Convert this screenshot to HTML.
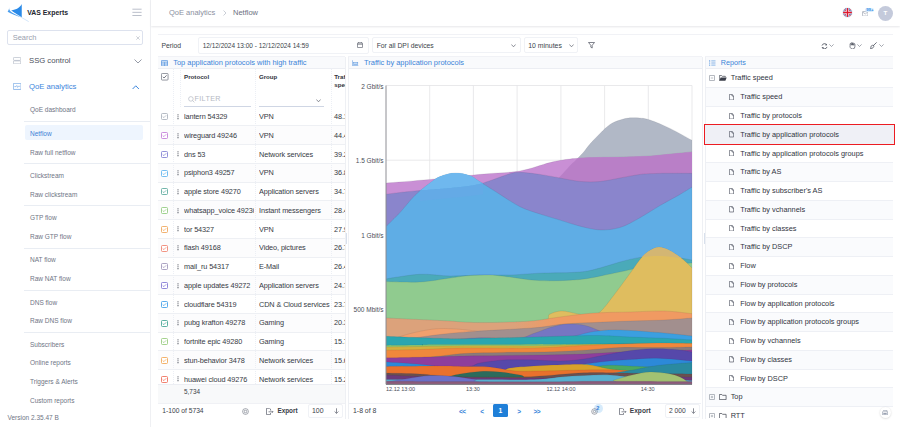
<!DOCTYPE html>
<html><head><meta charset="utf-8">
<style>
*{box-sizing:border-box;margin:0;padding:0}
html,body{width:900px;height:427px;overflow:hidden;background:#fff;font-family:"Liberation Sans",sans-serif;color:#3b3f4a}
.a{position:absolute}
.t{position:absolute;white-space:nowrap;line-height:10px;height:10px}
#side{position:absolute;left:0;top:0;width:151px;height:427px;background:#fff;border-right:1px solid #eff0f3}
.si{font-size:6.5px;color:#6f7585;left:30px;margin-top:0.6px}
.sep{position:absolute;left:24px;width:126px;height:1px;background:#e9edf3}
#hdr{position:absolute;left:151px;top:0;width:749px;height:26px;background:#fff;box-shadow:0 1px 2px #e6e7ea}

#card{position:absolute;left:158px;top:33.5px;width:735px;height:385px;border-top:1.5px solid #f4f5f8;background:#fff}
.box{position:absolute;border:1px solid #f0f2f6;border-radius:2px;background:#fff}
.tb{font-size:6.8px;color:#3b3f4a}
.ptitle{position:absolute;top:56.2px;height:12.6px;background:#f9fafc;border-bottom:1px solid #eceef3}
.ttl{font-size:7.45px;color:#3b84d8;margin-top:0.7px}
.row{position:absolute;left:158px;width:186.5px;height:18.75px;border-bottom:1px solid #eef0f4}
.cb{position:absolute;left:161px;width:6px;height:6px;border:0.8px solid;border-radius:1px}
.cb:after{content:"";position:absolute;left:1.2px;top:0.6px;width:2.4px;height:1.4px;border-left:0.7px solid;border-bottom:0.7px solid;border-color:inherit;transform:rotate(-45deg)}
.keb{position:absolute;left:177px;width:1.2px;height:5px;background:radial-gradient(circle,#555a66 0.55px,transparent 0.6px) 0 0/1.2px 1.67px}
.td{font-size:7.3px;color:#363a44;letter-spacing:-0.1px}
.tv{font-size:7.3px;color:#363a44;left:334px;letter-spacing:-0.1px}
.rr{position:absolute;left:705.5px;width:187.5px;height:18.75px;border-bottom:1px solid #eef0f5}
.rt{font-size:7.35px;color:#30343e;left:740.2px}
.fi{position:absolute;left:729.2px;width:4.6px;height:6px}
</style></head><body>
<div id="side">
  <!-- logo -->
  <svg class="a" style="left:0;top:0" width="30" height="24" viewBox="0 0 30 24">
    <path d="M21.75 4 C20.2 7.3 16.5 9.6 11.2 10.4 L21.75 17.6 Z" fill="#2a8ae8"/>
    <path d="M9.3 7 C8.7 9.2 9.6 11 12 12.6 L21.75 17.6 C16.5 16 11 13.8 7.6 11.8 C8.5 10.6 9 9.2 9.3 7Z" fill="#4b9eee"/>
    <path d="M10 10.3 Q13 13 21.5 17.4" stroke="#fff" stroke-width="0.45" fill="none" opacity="0.8"/>
    <path d="M21.75 17.6 L28.7 21.6" stroke="#a6cdf4" stroke-width="0.5"/>
  </svg>
  <div class="t" style="left:27.2px;top:8px;font-size:6.9px;font-weight:bold;color:#23262e">VAS Experts</div>
  <svg class="a" style="left:132px;top:8px" width="10" height="8.5" viewBox="0 0 10 8.5"><path d="M0.4 1.2 H9.6 M0.4 4.35 H9.6 M0.4 7.5 H9.6" stroke="#b3b9c5" stroke-width="0.9"/></svg>
  <!-- search -->
  <div class="a" style="left:7px;top:30px;width:135.5px;height:15px;border:1px solid #dde2ee;border-radius:2px"></div>
  <div class="t" style="left:12.7px;top:32.6px;font-size:7.5px;color:#9aa0ae">Search</div>
  <svg class="a" style="left:135.8px;top:35.5px" width="4" height="4" viewBox="0 0 4 4"><path d="M0.3 0.3 L3.7 3.7 M3.7 0.3 L0.3 3.7" stroke="#b0b5c0" stroke-width="0.6"/></svg>
  <!-- SSG control -->
  <svg class="a" style="left:12.8px;top:57.2px" width="8.2" height="7.3" viewBox="0 0 8.2 7.3"><rect x="0.4" y="0.4" width="7.4" height="3" rx="0.9" fill="none" stroke="#b4bac6" stroke-width="0.75"/><rect x="0.4" y="3.9" width="7.4" height="3" rx="0.9" fill="none" stroke="#b4bac6" stroke-width="0.75"/></svg>
  <div class="t" style="left:29px;top:56.2px;font-size:7.7px;color:#4b505c">SSG control</div>
  <svg class="a" style="left:134px;top:59px" width="8" height="5" viewBox="0 0 8 5"><path d="M0.5 0.5 L4 4 L7.5 0.5" fill="none" stroke="#7b8190" stroke-width="0.8"/></svg>
  <!-- QoE analytics -->
  <svg class="a" style="left:12.6px;top:82.8px" width="8.4" height="6.8" viewBox="0 0 8.4 6.8"><rect x="0.35" y="0.35" width="7.7" height="6.1" rx="0.4" fill="none" stroke="#5d98e0" stroke-width="0.65"/><path d="M1.3 3.6 H3 L3.8 2.5 L4.6 4.4 L5.3 3.3 H7.2" fill="none" stroke="#5d98e0" stroke-width="0.55"/></svg>
  <div class="t" style="left:29px;top:81.6px;font-size:7.7px;color:#3d86dc">QoE analytics</div>
  <svg class="a" style="left:132.3px;top:85px" width="7.5" height="5" viewBox="0 0 7.5 5"><path d="M0.6 4 L3.75 0.8 L6.9 4" fill="none" stroke="#3d86dc" stroke-width="1"/></svg>

  <div class="t si" style="top:104.7px">QoE dashboard</div>
  <div class="sep" style="top:121px"></div>
  <div class="a" style="left:24.5px;top:125px;width:118.5px;height:15px;background:#eef5fe;border-radius:2px"></div>
  <div class="t si" style="top:128.2px;color:#3d7fd6">Netflow</div>
  <div class="t si" style="top:147px">Raw full netflow</div>
  <div class="sep" style="top:163px"></div>
  <div class="t si" style="top:170.5px">Clickstream</div>
  <div class="t si" style="top:189px">Raw clickstream</div>
  <div class="sep" style="top:205px"></div>
  <div class="t si" style="top:212.5px">GTP flow</div>
  <div class="t si" style="top:231.3px">Raw GTP flow</div>
  <div class="sep" style="top:247.5px"></div>
  <div class="t si" style="top:254.7px">NAT flow</div>
  <div class="t si" style="top:273.5px">Raw NAT flow</div>
  <div class="sep" style="top:290px"></div>
  <div class="t si" style="top:297px">DNS flow</div>
  <div class="t si" style="top:315.8px">Raw DNS flow</div>
  <div class="sep" style="top:332px"></div>
  <div class="t si" style="top:339.2px">Subscribers</div>
  <div class="t si" style="top:357.9px">Online reports</div>
  <div class="t si" style="top:376.9px">Triggers &amp; Alerts</div>
  <div class="t si" style="top:395.7px">Custom reports</div>
  <div class="t si" style="left:7.5px;top:412.9px">Version 2.35.47 B</div>
</div>

<div id="hdr">
  <div class="t" style="left:18px;top:7.6px;font-size:7.5px;color:#8b90a0">QoE analytics</div>
  <svg class="a" style="left:72px;top:10px" width="4" height="6" viewBox="0 0 4 6"><path d="M0.5 0.5 L3 3 L0.5 5.5" fill="none" stroke="#b5bac5" stroke-width="0.7"/></svg>
  <div class="t" style="left:82px;top:7.6px;font-size:7.5px;color:#6b7080">Netflow</div>
  <svg class="a" style="left:689.5px;top:6.4px" width="13" height="13" viewBox="0 0 13 13">
    <defs><clipPath id="fc"><circle cx="6.5" cy="6.5" r="4.4"/></clipPath></defs>
    <circle cx="6.5" cy="6.5" r="5.3" fill="#eef0f4"/>
    <g clip-path="url(#fc)">
      <rect x="0" y="0" width="13" height="13" fill="#2a3d8f"/>
      <path d="M0 0 L13 13 M13 0 L0 13" stroke="#fff" stroke-width="1.4"/>
      <path d="M0 0 L13 13 M13 0 L0 13" stroke="#d52b3a" stroke-width="0.8"/>
      <path d="M6.5 0 V13 M0 6.5 H13" stroke="#fff" stroke-width="2.4"/>
      <path d="M6.5 0 V13 M0 6.5 H13" stroke="#e0182d" stroke-width="1.3"/>
    </g>
  </svg>
  <svg class="a" style="left:710.5px;top:10.5px" width="6.5" height="5.5" viewBox="0 0 6.5 5.5"><rect x="0.4" y="0.6" width="5.6" height="4.5" rx="0.6" fill="none" stroke="#9aa0ae" stroke-width="0.7"/><path d="M0.6 1 L3.2 3 L5.8 1" fill="none" stroke="#9aa0ae" stroke-width="0.6"/></svg>
  <div class="a" style="left:714.2px;top:7.5px;width:9.3px;height:4.2px;border-radius:2.1px;background:#d9ecfc"></div>
  <div class="t" style="left:714.2px;width:9.3px;text-align:center;top:4.6px;font-size:4.2px;font-weight:bold;color:#3a8ee6">99+</div>
  <div class="a" style="left:726.8px;top:5.7px;width:15px;height:15px;border-radius:50%;background:#c4cadb"></div>
  <div class="t" style="left:726.8px;width:15px;text-align:center;top:8.4px;font-size:6.2px;font-weight:bold;color:#fff">T</div>
</div>


<div id="card"></div>
<!-- toolbar -->
<div class="a" style="left:158px;top:33.5px;width:735px;height:1px;background:#f1f2f6"></div>
<div class="t tb" style="left:161.5px;top:40.7px">Period</div>
<div class="box" style="left:198px;top:37.3px;width:171px;height:16.4px"></div>
<div class="t" style="left:202.7px;top:40.7px;font-size:6.46px;color:#3b3f4a">12/12/2024 13:00 - 12/12/2024 14:59</div>
<svg class="a" style="left:357px;top:42px" width="6" height="6" viewBox="0 0 6 6"><rect x="0.4" y="0.9" width="5.2" height="4.7" rx="0.6" fill="none" stroke="#5a5f6c" stroke-width="0.7"/><path d="M0.4 2.2 H5.6 M1.7 0 V1.2 M4.3 0 V1.2" stroke="#5a5f6c" stroke-width="0.7"/></svg>
<div class="box" style="left:372.3px;top:37.3px;width:148.5px;height:16.2px"></div>
<div class="t tb" style="left:376.7px;top:40.6px">For all DPI devices</div>
<svg class="a" style="left:510.5px;top:43.5px" width="5" height="3.5" viewBox="0 0 5 3.5"><path d="M0.4 0.5 L2.5 2.8 L4.6 0.5" fill="none" stroke="#5a5f6c" stroke-width="0.7"/></svg>
<div class="box" style="left:524.3px;top:37.3px;width:54px;height:16.2px"></div>
<div class="t tb" style="left:528.2px;top:40.6px;font-size:6.9px">10 minutes</div>
<svg class="a" style="left:569px;top:43.5px" width="5" height="3.5" viewBox="0 0 5 3.5"><path d="M0.4 0.5 L2.5 2.8 L4.6 0.5" fill="none" stroke="#5a5f6c" stroke-width="0.7"/></svg>
<svg class="a" style="left:588px;top:42.3px" width="7" height="6.5" viewBox="0 0 7 6.5"><path d="M0.5 0.5 H6.5 L4.2 3.3 V6 L2.8 5.2 V3.3 Z" fill="none" stroke="#4a4f5c" stroke-width="0.7" stroke-linejoin="round"/></svg>
<!-- right toolbar icons -->
<svg class="a" style="left:820.5px;top:42.5px" width="7" height="6.5" viewBox="0 0 7 6.5"><path d="M1 2.6 A2.6 2.6 0 0 1 5.8 2 M6 3.9 A2.6 2.6 0 0 1 1.2 4.5" fill="none" stroke="#4a4f5c" stroke-width="0.8"/><path d="M5 0.6 L6.1 2.3 L4.3 2.4Z M2 6 L0.9 4.2 L2.7 4.1Z" fill="#4a4f5c"/></svg>
<svg class="a" style="left:829.4px;top:44.3px" width="5" height="3" viewBox="0 0 5 3"><path d="M0.4 0.4 L2.5 2.5 L4.6 0.4" fill="none" stroke="#6a6f7c" stroke-width="0.6"/></svg>
<svg class="a" style="left:848.6px;top:41.8px" width="7" height="7.5" viewBox="0 0 7 7.5"><path d="M1.1 3.8 V2 A0.6 0.6 0 0 1 2.3 2 V3.2 V1.2 A0.6 0.6 0 0 1 3.5 1.2 V3.2 V1.5 A0.6 0.6 0 0 1 4.7 1.5 V3.3 V2.3 A0.6 0.6 0 0 1 5.9 2.3 V4.6 Q5.9 7 3.6 7 Q1.9 7 1.3 5.6 Q0.8 4.6 1.1 3.8Z" fill="none" stroke="#4a4f5c" stroke-width="0.7" stroke-linejoin="round"/></svg>
<svg class="a" style="left:857.3px;top:44.3px" width="5" height="3" viewBox="0 0 5 3"><path d="M0.4 0.4 L2.5 2.5 L4.6 0.4" fill="none" stroke="#6a6f7c" stroke-width="0.6"/></svg>
<svg class="a" style="left:869.5px;top:41.8px" width="7" height="7" viewBox="0 0 7 7"><path d="M6.6 0.4 L3.3 3.7" stroke="#4a4f5c" stroke-width="0.8"/><path d="M3.6 3.4 Q4.2 4.6 3.2 5.6 Q2 6.7 0.4 6.6 Q0.9 6 0.9 4.9 Q1 3.7 2.3 3.3Z" fill="none" stroke="#4a4f5c" stroke-width="0.75"/></svg>
<svg class="a" style="left:879px;top:44.3px" width="5" height="3" viewBox="0 0 5 3"><path d="M0.4 0.4 L2.5 2.5 L4.6 0.4" fill="none" stroke="#6a6f7c" stroke-width="0.6"/></svg>

<!-- panel title rows -->
<div class="ptitle" style="left:158px;width:186.5px;border-top:1px solid #f1f2f6"></div>
<div class="ptitle" style="left:348.4px;width:353.2px;border-top:1px solid #f1f2f6"></div>
<div class="ptitle" style="left:705.3px;width:187.7px;border-top:1px solid #f1f2f6"></div>
<div class="a" style="left:344.5px;top:56.7px;width:1px;height:362px;background:#eef0f4"></div>
<div class="a" style="left:348.4px;top:56.7px;width:1px;height:362px;background:#eef0f4"></div>
<div class="a" style="left:701.5px;top:56.7px;width:1px;height:362px;background:#eef0f4"></div>
<div class="a" style="left:705.3px;top:56.7px;width:1px;height:362px;background:#eef0f4"></div>
<div class="a" style="left:346px;top:232.6px;width:1px;height:11.3px;background:#d8e0ec"></div>
<div class="a" style="left:703.5px;top:232.6px;width:1px;height:11.3px;background:#d8e0ec"></div>

<svg class="a" style="left:161px;top:59.6px" width="7" height="6.5" viewBox="0 0 7 6.5"><rect x="0.4" y="0.4" width="6.2" height="5.6" rx="0.7" fill="#dbe8f8" stroke="#4a8ddc" stroke-width="0.7"/><path d="M0.4 2.2 H6.6 M0.4 4 H6.6 M3.5 2.2 V6" stroke="#4a8ddc" stroke-width="0.55"/></svg>
<div class="t ttl" style="left:173.2px;top:57.4px">Top application protocols with high traffic</div>
<svg class="a" style="left:352px;top:59.8px" width="6.5" height="6" viewBox="0 0 6.5 6"><path d="M0.4 0.3 V5.6 H6.3" fill="none" stroke="#5b95dd" stroke-width="0.6"/><rect x="1.7" y="2.5" width="4.1" height="2.2" fill="#c4dbf5" stroke="#5b95dd" stroke-width="0.5"/></svg>
<div class="t ttl" style="left:364px;top:57.2px">Traffic by application protocols</div>
<svg class="a" style="left:709.4px;top:59.8px" width="7" height="6" viewBox="0 0 7 6"><path d="M2.3 0.9 H6.5 M2.3 3 H6.5 M2.3 5.1 H6.5" stroke="#3b84d8" stroke-width="0.6"/><circle cx="0.7" cy="0.9" r="0.55" fill="#3b84d8"/><circle cx="0.7" cy="3" r="0.55" fill="#3b84d8"/><circle cx="0.7" cy="5.1" r="0.55" fill="#3b84d8"/></svg>
<div class="t ttl" style="left:720.8px;top:57.6px;font-size:7.2px">Reports</div>


<!-- table -->
<div class="a" style="left:0;top:0;width:344.5px;height:427px;overflow:hidden">
<svg class="a" style="left:161px;top:73px" width="7.5" height="7.5" viewBox="0 0 7.5 7.5"><rect x="0.45" y="0.45" width="6.6" height="6.6" rx="0.8" fill="#fff" stroke="#777c88" stroke-width="0.8"/><path d="M1.9 3.8 L3.1 5 L5.6 2.3" fill="none" stroke="#4a4f5c" stroke-width="0.75"/></svg>
<div class="t" style="left:184px;top:72px;font-size:6.2px;font-weight:bold;color:#2f333c">Protocol</div>
<div class="t" style="left:259px;top:72px;font-size:6.1px;font-weight:bold;color:#2f333c">Group</div>
<div class="t" style="left:334.2px;top:72px;font-size:6.2px;font-weight:bold;color:#2f333c">Traffic</div>
<div class="t" style="left:334.2px;top:79.5px;font-size:6.2px;font-weight:bold;color:#2f333c">speed</div>
<svg class="a" style="left:188px;top:96px" width="7" height="7" viewBox="0 0 7 7"><circle cx="2.9" cy="2.9" r="2.3" fill="none" stroke="#a9aebb" stroke-width="0.6"/><path d="M4.6 4.6 L6.4 6.4" stroke="#a9aebb" stroke-width="0.6"/></svg>
<div class="t" style="left:194.5px;top:94.3px;font-size:7.2px;color:#b5b9c4;letter-spacing:0.35px">FILTER</div>
<div class="a" style="left:184px;top:106px;width:66.5px;height:1px;background:#cfd6e4"></div>
<div class="a" style="left:259px;top:106px;width:64.7px;height:1px;background:#cfd6e4"></div>
<svg class="a" style="left:316px;top:98.5px" width="5" height="3.5" viewBox="0 0 5 3.5"><path d="M0.4 0.5 L2.5 2.8 L4.6 0.5" fill="none" stroke="#5a5f6c" stroke-width="0.7"/></svg>
<div class="row" style="top:107.55px;background:#fff"></div><svg class="a" style="left:160.8px;top:113.40px" width="7" height="7" viewBox="0 0 7 7"><rect x="0.5" y="0.5" width="6" height="6" rx="0.9" fill="#fff" stroke="#a9b0bb" stroke-width="0.85"/><path d="M1.7 3.5 L2.9 4.6 L5.2 2.3" fill="none" stroke="#a9b0bb" stroke-width="0.75"/></svg><svg class="a" style="left:176.5px;top:113.90px" width="2" height="6" viewBox="0 0 2 6"><circle cx="1" cy="0.8" r="0.62" fill="#4a4f5a"/><circle cx="1" cy="2.75" r="0.62" fill="#4a4f5a"/><circle cx="1" cy="4.7" r="0.62" fill="#4a4f5a"/></svg><div class="t td" style="left:184px;top:112.10px;width:70px;overflow:hidden">lantern 54329</div><div class="t td" style="left:259px;top:112.10px;width:71px;overflow:hidden">VPN</div><div class="t tv" style="top:112.10px">48.1</div>
<div class="row" style="top:126.30px;background:#fcfcfd"></div><svg class="a" style="left:160.8px;top:132.15px" width="7" height="7" viewBox="0 0 7 7"><rect x="0.5" y="0.5" width="6" height="6" rx="0.9" fill="#fff" stroke="#c27ad8" stroke-width="0.85"/><path d="M1.7 3.5 L2.9 4.6 L5.2 2.3" fill="none" stroke="#c27ad8" stroke-width="0.75"/></svg><svg class="a" style="left:176.5px;top:132.65px" width="2" height="6" viewBox="0 0 2 6"><circle cx="1" cy="0.8" r="0.62" fill="#4a4f5a"/><circle cx="1" cy="2.75" r="0.62" fill="#4a4f5a"/><circle cx="1" cy="4.7" r="0.62" fill="#4a4f5a"/></svg><div class="t td" style="left:184px;top:130.85px;width:70px;overflow:hidden">wireguard 49246</div><div class="t td" style="left:259px;top:130.85px;width:71px;overflow:hidden">VPN</div><div class="t tv" style="top:130.85px">44.4</div>
<div class="row" style="top:145.05px;background:#fff"></div><svg class="a" style="left:160.8px;top:150.90px" width="7" height="7" viewBox="0 0 7 7"><rect x="0.5" y="0.5" width="6" height="6" rx="0.9" fill="#fff" stroke="#7f7dd2" stroke-width="0.85"/><path d="M1.7 3.5 L2.9 4.6 L5.2 2.3" fill="none" stroke="#7f7dd2" stroke-width="0.75"/></svg><svg class="a" style="left:176.5px;top:151.40px" width="2" height="6" viewBox="0 0 2 6"><circle cx="1" cy="0.8" r="0.62" fill="#4a4f5a"/><circle cx="1" cy="2.75" r="0.62" fill="#4a4f5a"/><circle cx="1" cy="4.7" r="0.62" fill="#4a4f5a"/></svg><div class="t td" style="left:184px;top:149.60px;width:70px;overflow:hidden">dns 53</div><div class="t td" style="left:259px;top:149.60px;width:71px;overflow:hidden">Network services</div><div class="t tv" style="top:149.60px">39.2</div>
<div class="row" style="top:163.80px;background:#fcfcfd"></div><svg class="a" style="left:160.8px;top:169.65px" width="7" height="7" viewBox="0 0 7 7"><rect x="0.5" y="0.5" width="6" height="6" rx="0.9" fill="#fff" stroke="#5cb2ee" stroke-width="0.85"/><path d="M1.7 3.5 L2.9 4.6 L5.2 2.3" fill="none" stroke="#5cb2ee" stroke-width="0.75"/></svg><svg class="a" style="left:176.5px;top:170.15px" width="2" height="6" viewBox="0 0 2 6"><circle cx="1" cy="0.8" r="0.62" fill="#4a4f5a"/><circle cx="1" cy="2.75" r="0.62" fill="#4a4f5a"/><circle cx="1" cy="4.7" r="0.62" fill="#4a4f5a"/></svg><div class="t td" style="left:184px;top:168.35px;width:70px;overflow:hidden">psiphon3 49257</div><div class="t td" style="left:259px;top:168.35px;width:71px;overflow:hidden">VPN</div><div class="t tv" style="top:168.35px">36.8</div>
<div class="row" style="top:182.55px;background:#fff"></div><svg class="a" style="left:160.8px;top:188.40px" width="7" height="7" viewBox="0 0 7 7"><rect x="0.5" y="0.5" width="6" height="6" rx="0.9" fill="#fff" stroke="#58a99c" stroke-width="0.85"/><path d="M1.7 3.5 L2.9 4.6 L5.2 2.3" fill="none" stroke="#58a99c" stroke-width="0.75"/></svg><svg class="a" style="left:176.5px;top:188.90px" width="2" height="6" viewBox="0 0 2 6"><circle cx="1" cy="0.8" r="0.62" fill="#4a4f5a"/><circle cx="1" cy="2.75" r="0.62" fill="#4a4f5a"/><circle cx="1" cy="4.7" r="0.62" fill="#4a4f5a"/></svg><div class="t td" style="left:184px;top:187.10px;width:70px;overflow:hidden">apple store 49270</div><div class="t td" style="left:259px;top:187.10px;width:71px;overflow:hidden">Application servers</div><div class="t tv" style="top:187.10px">34.7</div>
<div class="row" style="top:201.30px;background:#fcfcfd"></div><svg class="a" style="left:160.8px;top:207.15px" width="7" height="7" viewBox="0 0 7 7"><rect x="0.5" y="0.5" width="6" height="6" rx="0.9" fill="#fff" stroke="#8fca7c" stroke-width="0.85"/><path d="M1.7 3.5 L2.9 4.6 L5.2 2.3" fill="none" stroke="#8fca7c" stroke-width="0.75"/></svg><svg class="a" style="left:176.5px;top:207.65px" width="2" height="6" viewBox="0 0 2 6"><circle cx="1" cy="0.8" r="0.62" fill="#4a4f5a"/><circle cx="1" cy="2.75" r="0.62" fill="#4a4f5a"/><circle cx="1" cy="4.7" r="0.62" fill="#4a4f5a"/></svg><div class="t td" style="left:184px;top:205.85px;width:70px;overflow:hidden">whatsapp_voice 49230</div><div class="t td" style="left:259px;top:205.85px;width:71px;overflow:hidden">Instant messengers</div><div class="t tv" style="top:205.85px">28.4</div>
<div class="row" style="top:220.05px;background:#fff"></div><svg class="a" style="left:160.8px;top:225.90px" width="7" height="7" viewBox="0 0 7 7"><rect x="0.5" y="0.5" width="6" height="6" rx="0.9" fill="#fff" stroke="#f0a456" stroke-width="0.85"/><path d="M1.7 3.5 L2.9 4.6 L5.2 2.3" fill="none" stroke="#f0a456" stroke-width="0.75"/></svg><svg class="a" style="left:176.5px;top:226.40px" width="2" height="6" viewBox="0 0 2 6"><circle cx="1" cy="0.8" r="0.62" fill="#4a4f5a"/><circle cx="1" cy="2.75" r="0.62" fill="#4a4f5a"/><circle cx="1" cy="4.7" r="0.62" fill="#4a4f5a"/></svg><div class="t td" style="left:184px;top:224.60px;width:70px;overflow:hidden">tor 54327</div><div class="t td" style="left:259px;top:224.60px;width:71px;overflow:hidden">VPN</div><div class="t tv" style="top:224.60px">27.9</div>
<div class="row" style="top:238.80px;background:#fcfcfd"></div><svg class="a" style="left:160.8px;top:244.65px" width="7" height="7" viewBox="0 0 7 7"><rect x="0.5" y="0.5" width="6" height="6" rx="0.9" fill="#fff" stroke="#f0806c" stroke-width="0.85"/><path d="M1.7 3.5 L2.9 4.6 L5.2 2.3" fill="none" stroke="#f0806c" stroke-width="0.75"/></svg><svg class="a" style="left:176.5px;top:245.15px" width="2" height="6" viewBox="0 0 2 6"><circle cx="1" cy="0.8" r="0.62" fill="#4a4f5a"/><circle cx="1" cy="2.75" r="0.62" fill="#4a4f5a"/><circle cx="1" cy="4.7" r="0.62" fill="#4a4f5a"/></svg><div class="t td" style="left:184px;top:243.35px;width:70px;overflow:hidden">flash 49168</div><div class="t td" style="left:259px;top:243.35px;width:71px;overflow:hidden">Video, pictures</div><div class="t tv" style="top:243.35px">26.7</div>
<div class="row" style="top:257.55px;background:#fff"></div><svg class="a" style="left:160.8px;top:263.40px" width="7" height="7" viewBox="0 0 7 7"><rect x="0.5" y="0.5" width="6" height="6" rx="0.9" fill="#fff" stroke="#9d93b8" stroke-width="0.85"/><path d="M1.7 3.5 L2.9 4.6 L5.2 2.3" fill="none" stroke="#9d93b8" stroke-width="0.75"/></svg><svg class="a" style="left:176.5px;top:263.90px" width="2" height="6" viewBox="0 0 2 6"><circle cx="1" cy="0.8" r="0.62" fill="#4a4f5a"/><circle cx="1" cy="2.75" r="0.62" fill="#4a4f5a"/><circle cx="1" cy="4.7" r="0.62" fill="#4a4f5a"/></svg><div class="t td" style="left:184px;top:262.10px;width:70px;overflow:hidden">mail_ru 54317</div><div class="t td" style="left:259px;top:262.10px;width:71px;overflow:hidden">E-Mail</div><div class="t tv" style="top:262.10px">26.4</div>
<div class="row" style="top:276.30px;background:#fcfcfd"></div><svg class="a" style="left:160.8px;top:282.15px" width="7" height="7" viewBox="0 0 7 7"><rect x="0.5" y="0.5" width="6" height="6" rx="0.9" fill="#fff" stroke="#7d72d2" stroke-width="0.85"/><path d="M1.7 3.5 L2.9 4.6 L5.2 2.3" fill="none" stroke="#7d72d2" stroke-width="0.75"/></svg><svg class="a" style="left:176.5px;top:282.65px" width="2" height="6" viewBox="0 0 2 6"><circle cx="1" cy="0.8" r="0.62" fill="#4a4f5a"/><circle cx="1" cy="2.75" r="0.62" fill="#4a4f5a"/><circle cx="1" cy="4.7" r="0.62" fill="#4a4f5a"/></svg><div class="t td" style="left:184px;top:280.85px;width:70px;overflow:hidden">apple updates 49272</div><div class="t td" style="left:259px;top:280.85px;width:71px;overflow:hidden">Application servers</div><div class="t tv" style="top:280.85px">24.7</div>
<div class="row" style="top:295.05px;background:#fff"></div><svg class="a" style="left:160.8px;top:300.90px" width="7" height="7" viewBox="0 0 7 7"><rect x="0.5" y="0.5" width="6" height="6" rx="0.9" fill="#fff" stroke="#3c9de8" stroke-width="0.85"/><path d="M1.7 3.5 L2.9 4.6 L5.2 2.3" fill="none" stroke="#3c9de8" stroke-width="0.75"/></svg><svg class="a" style="left:176.5px;top:301.40px" width="2" height="6" viewBox="0 0 2 6"><circle cx="1" cy="0.8" r="0.62" fill="#4a4f5a"/><circle cx="1" cy="2.75" r="0.62" fill="#4a4f5a"/><circle cx="1" cy="4.7" r="0.62" fill="#4a4f5a"/></svg><div class="t td" style="left:184px;top:299.60px;width:70px;overflow:hidden">cloudflare 54319</div><div class="t td" style="left:259px;top:299.60px;width:71px;overflow:hidden">CDN &amp; Cloud services</div><div class="t tv" style="top:299.60px">23.7</div>
<div class="row" style="top:313.80px;background:#fcfcfd"></div><svg class="a" style="left:160.8px;top:319.65px" width="7" height="7" viewBox="0 0 7 7"><rect x="0.5" y="0.5" width="6" height="6" rx="0.9" fill="#fff" stroke="#3ea392" stroke-width="0.85"/><path d="M1.7 3.5 L2.9 4.6 L5.2 2.3" fill="none" stroke="#3ea392" stroke-width="0.75"/></svg><svg class="a" style="left:176.5px;top:320.15px" width="2" height="6" viewBox="0 0 2 6"><circle cx="1" cy="0.8" r="0.62" fill="#4a4f5a"/><circle cx="1" cy="2.75" r="0.62" fill="#4a4f5a"/><circle cx="1" cy="4.7" r="0.62" fill="#4a4f5a"/></svg><div class="t td" style="left:184px;top:318.35px;width:70px;overflow:hidden">pubg krafton 49278</div><div class="t td" style="left:259px;top:318.35px;width:71px;overflow:hidden">Gaming</div><div class="t tv" style="top:318.35px">20.3</div>
<div class="row" style="top:332.55px;background:#fff"></div><svg class="a" style="left:160.8px;top:338.40px" width="7" height="7" viewBox="0 0 7 7"><rect x="0.5" y="0.5" width="6" height="6" rx="0.9" fill="#fff" stroke="#93ca7a" stroke-width="0.85"/><path d="M1.7 3.5 L2.9 4.6 L5.2 2.3" fill="none" stroke="#93ca7a" stroke-width="0.75"/></svg><svg class="a" style="left:176.5px;top:338.90px" width="2" height="6" viewBox="0 0 2 6"><circle cx="1" cy="0.8" r="0.62" fill="#4a4f5a"/><circle cx="1" cy="2.75" r="0.62" fill="#4a4f5a"/><circle cx="1" cy="4.7" r="0.62" fill="#4a4f5a"/></svg><div class="t td" style="left:184px;top:337.10px;width:70px;overflow:hidden">fortnite epic 49280</div><div class="t td" style="left:259px;top:337.10px;width:71px;overflow:hidden">Gaming</div><div class="t tv" style="top:337.10px">15.7</div>
<div class="row" style="top:351.30px;background:#fcfcfd"></div><svg class="a" style="left:160.8px;top:357.15px" width="7" height="7" viewBox="0 0 7 7"><rect x="0.5" y="0.5" width="6" height="6" rx="0.9" fill="#fff" stroke="#f2a552" stroke-width="0.85"/><path d="M1.7 3.5 L2.9 4.6 L5.2 2.3" fill="none" stroke="#f2a552" stroke-width="0.75"/></svg><svg class="a" style="left:176.5px;top:357.65px" width="2" height="6" viewBox="0 0 2 6"><circle cx="1" cy="0.8" r="0.62" fill="#4a4f5a"/><circle cx="1" cy="2.75" r="0.62" fill="#4a4f5a"/><circle cx="1" cy="4.7" r="0.62" fill="#4a4f5a"/></svg><div class="t td" style="left:184px;top:355.85px;width:70px;overflow:hidden">stun-behavior 3478</div><div class="t td" style="left:259px;top:355.85px;width:71px;overflow:hidden">Network services</div><div class="t tv" style="top:355.85px">15.6</div>
<div class="row" style="top:370.05px;background:#fff"></div><svg class="a" style="left:160.8px;top:375.90px" width="7" height="7" viewBox="0 0 7 7"><rect x="0.5" y="0.5" width="6" height="6" rx="0.9" fill="#fff" stroke="#f06a55" stroke-width="0.85"/><path d="M1.7 3.5 L2.9 4.6 L5.2 2.3" fill="none" stroke="#f06a55" stroke-width="0.75"/></svg><svg class="a" style="left:176.5px;top:376.40px" width="2" height="6" viewBox="0 0 2 6"><circle cx="1" cy="0.8" r="0.62" fill="#4a4f5a"/><circle cx="1" cy="2.75" r="0.62" fill="#4a4f5a"/><circle cx="1" cy="4.7" r="0.62" fill="#4a4f5a"/></svg><div class="t td" style="left:184px;top:374.60px;width:70px;overflow:hidden">huawei cloud 49276</div><div class="t td" style="left:259px;top:374.60px;width:71px;overflow:hidden">Network services</div><div class="t tv" style="top:374.60px">15.2</div>
<div class="a" style="left:172.5px;top:68.3px;width:0;height:316px;border-left:1px dotted #eceff5"></div>
<div class="a" style="left:180.3px;top:68.3px;width:0;height:39px;border-left:1px dotted #eceff5"></div>
<div class="a" style="left:254.8px;top:68.3px;width:0;height:316px;border-left:1px dotted #eceff5"></div>
<div class="a" style="left:330.5px;top:68.3px;width:0;height:316px;border-left:1px dotted #eceff5"></div>
<div class="a" style="left:158px;top:383.9px;width:186.5px;height:19.8px;background:#f8f9fa;border-top:1px solid #eceef3;border-bottom:1px solid #f0f1f5"></div>
<div class="t" style="left:184px;top:387.1px;font-size:6.4px;color:#3a3e48">5,734</div>
<div class="t" style="left:162.3px;top:406px;font-size:6.7px;color:#3a3e48">1-100 of 5734</div>
<svg class="a" style="left:242px;top:408px" width="7" height="7" viewBox="0 0 7 7"><circle cx="3.5" cy="3.5" r="2.9" fill="none" stroke="#6a6f7c" stroke-width="0.6"/><circle cx="3.5" cy="3.5" r="1.3" fill="none" stroke="#6a6f7c" stroke-width="0.6"/></svg>
<svg class="a" style="left:266px;top:407.5px" width="8" height="7" viewBox="0 0 8 7"><path d="M4.5 2.5 V1 L3.5 0.3 H0.5 V6.6 H4.5 V5" fill="none" stroke="#5a5f6c" stroke-width="0.7"/><path d="M2.5 3.8 H7 M6 2.8 L7 3.8 L6 4.8" fill="none" stroke="#5a5f6c" stroke-width="0.7"/></svg>
<div class="t" style="left:277.4px;top:406px;font-size:6.4px;font-weight:bold;color:#3a3e48">Export</div>
<div class="box" style="left:307.7px;top:404.3px;width:35.6px;height:13.4px"></div>
<div class="t" style="left:312px;top:406px;font-size:6.9px;color:#3a3e48">100</div>
<svg class="a" style="left:333.8px;top:408px" width="5" height="6" viewBox="0 0 5 6"><path d="M2.5 0.3 V5.3 M0.6 3.5 L2.5 5.4 L4.4 3.5" fill="none" stroke="#5a5f6c" stroke-width="0.7"/></svg>
</div>
<svg class="a" style="left:0;top:0" width="900" height="427" viewBox="0 0 900 427"><defs><linearGradient id="salg" x1="386" y1="0" x2="692" y2="0" gradientUnits="userSpaceOnUse"><stop offset="0.42" stop-color="#dca27b"/><stop offset="0.56" stop-color="#f09a62"/></linearGradient></defs><defs><clipPath id="pc"><rect x="386.0" y="84.5" width="306.0" height="299.8"/></clipPath></defs><line x1="386.0" y1="85.5" x2="692.0" y2="85.5" stroke="#e3e3e6" stroke-width="0.8"/><line x1="386.0" y1="160.2" x2="692.0" y2="160.2" stroke="#e3e3e6" stroke-width="0.8"/><line x1="386.0" y1="234.9" x2="692.0" y2="234.9" stroke="#e3e3e6" stroke-width="0.8"/><line x1="386.0" y1="309.6" x2="692.0" y2="309.6" stroke="#e3e3e6" stroke-width="0.8"/><line x1="386.0" y1="384.3" x2="692.0" y2="384.3" stroke="#e3e3e6" stroke-width="0.8"/><line x1="429.7" y1="85.5" x2="429.7" y2="384.3" stroke="#e3e3e6" stroke-width="0.8"/><line x1="473.4" y1="85.5" x2="473.4" y2="384.3" stroke="#e3e3e6" stroke-width="0.8"/><line x1="517.1" y1="85.5" x2="517.1" y2="384.3" stroke="#e3e3e6" stroke-width="0.8"/><line x1="560.9" y1="85.5" x2="560.9" y2="384.3" stroke="#e3e3e6" stroke-width="0.8"/><line x1="604.6" y1="85.5" x2="604.6" y2="384.3" stroke="#e3e3e6" stroke-width="0.8"/><line x1="648.3" y1="85.5" x2="648.3" y2="384.3" stroke="#e3e3e6" stroke-width="0.8"/><line x1="692.0" y1="85.5" x2="692.0" y2="384.3" stroke="#e3e3e6" stroke-width="0.8"/><g clip-path="url(#pc)"><path d="M386.0 215.0 C413.3 209.5 518.0 191.5 550.0 182.0 C582.0 172.5 571.3 164.3 578.0 158.0 C584.7 151.7 586.3 148.1 590.0 144.0 C593.7 139.9 596.7 136.8 600.0 133.5 C603.3 130.2 606.7 126.8 610.0 124.5 C613.3 122.2 616.7 121.1 620.0 120.0 C623.3 118.9 626.7 118.1 630.0 117.8 C633.3 117.5 636.7 117.6 640.0 118.0 C643.3 118.4 645.0 118.3 650.0 120.0 C655.0 121.7 663.0 125.0 670.0 128.4 C677.0 131.8 688.3 138.3 692.0 140.3 L692.0 385.3 L386.0 385.3 Z" fill="#b1b8c6" stroke="rgba(40,40,60,0.18)" stroke-width="0.5"/><path d="M386.0 183.0 C393.3 182.4 413.7 180.9 430.0 179.4 C446.3 177.9 469.0 175.4 484.0 174.0 C499.0 172.6 509.0 172.8 520.0 170.9 C531.0 169.0 541.7 164.5 550.0 162.5 C558.3 160.5 563.3 159.8 570.0 159.0 C576.7 158.2 581.7 157.9 590.0 157.6 C598.3 157.3 610.0 157.4 620.0 157.1 C630.0 156.8 641.7 156.5 650.0 156.0 C658.3 155.5 663.0 154.8 670.0 154.1 C677.0 153.4 688.3 152.3 692.0 151.9 L692.0 385.3 L386.0 385.3 Z" fill="#c98fd5" stroke="rgba(40,40,60,0.18)" stroke-width="0.5"/><path d="M548.0 200.0 L550.4 194.3 L552.8 188.6 L555.2 183.2 L557.6 179.5 L560.0 176.5 L562.4 174.0 L564.8 171.2 L567.2 168.8 L569.6 166.0 L572.0 163.5 L574.4 161.4 L576.8 159.1 L579.2 158.1 L581.6 158.0 L584.0 157.9 L586.4 157.7 L588.8 157.6 L591.2 157.6 L593.6 157.5 L596.0 157.4 L598.4 157.4 L600.8 157.4 L603.2 157.3 L605.6 157.3 L608.0 157.3 L610.4 157.3 L612.8 157.2 L615.2 157.2 L617.6 157.2 L620.0 157.1 L622.4 157.0 L624.8 157.0 L627.2 156.9 L629.6 156.8 L632.0 156.8 L634.4 156.7 L636.8 156.6 L639.2 156.5 L641.6 156.4 L644.0 156.3 L646.4 156.2 L648.8 156.1 L651.2 155.9 L653.6 155.8 L656.0 155.5 L658.4 155.3 L660.8 155.1 L663.2 154.8 L665.6 154.6 L668.0 154.3 L670.4 154.0 L672.8 153.8 L675.2 153.6 L677.6 153.3 L680.0 153.1 L682.4 152.9 L684.8 152.6 L687.2 152.4 L689.6 152.2 L692.0 151.9 L692.0 200.0 L548.0 200.0Z" fill="#b97fc7"/><path d="M386.0 194.2 C390.8 193.6 404.3 191.9 415.0 190.9 C425.7 189.9 440.0 189.0 450.0 188.0 C460.0 187.0 468.3 186.2 475.0 185.0 C481.7 183.8 484.2 182.6 490.0 180.7 C495.8 178.8 505.0 175.1 510.0 173.7 C515.0 172.3 515.0 172.2 520.0 172.3 C525.0 172.4 533.3 173.5 540.0 174.4 C546.7 175.3 553.3 176.8 560.0 178.0 C566.7 179.2 573.3 180.8 580.0 181.4 C586.7 182.0 593.3 182.1 600.0 181.5 C606.7 180.9 613.3 179.2 620.0 178.0 C626.7 176.8 633.3 175.2 640.0 174.4 C646.7 173.6 651.3 173.6 660.0 173.4 C668.7 173.2 686.7 173.4 692.0 173.4 L692.0 385.3 L386.0 385.3 Z" fill="#8a85cc" stroke="rgba(40,40,60,0.18)" stroke-width="0.5"/><path d="M386.0 226.5 C388.3 224.2 395.2 217.7 400.0 212.5 C404.8 207.3 410.0 200.2 415.0 195.3 C420.0 190.4 425.8 186.1 430.0 183.0 C434.2 179.9 435.8 178.2 440.0 176.5 C444.2 174.8 450.0 173.1 455.0 173.0 C460.0 172.9 465.8 174.2 470.0 175.7 C474.2 177.2 475.0 178.7 480.0 181.8 C485.0 184.9 493.3 190.2 500.0 194.4 C506.7 198.6 513.3 203.4 520.0 206.7 C526.7 210.0 533.3 211.8 540.0 214.0 C546.7 216.2 553.3 218.1 560.0 220.1 C566.7 222.1 573.3 224.6 580.0 226.2 C586.7 227.8 593.3 229.7 600.0 229.9 C606.7 230.1 613.3 229.5 620.0 227.5 C626.7 225.5 633.3 221.4 640.0 217.7 C646.7 214.0 653.3 209.4 660.0 205.5 C666.7 201.6 674.7 197.5 680.0 194.4 C685.3 191.3 690.0 188.3 692.0 187.1 L692.0 385.3 L386.0 385.3 Z" fill="#5fade5" stroke="rgba(40,40,60,0.18)" stroke-width="0.5"/><path d="M418.0 190.6 L419.1 190.5 L420.3 190.4 L421.4 189.7 L422.5 188.8 L423.7 187.9 L424.8 187.0 L425.9 186.1 L427.1 185.3 L428.2 184.2 L429.3 183.5 L430.5 182.5 L431.6 181.7 L432.7 180.9 L433.9 180.0 L435.0 179.2 L436.1 178.5 L437.3 177.8 L438.4 177.3 L439.5 176.8 L440.7 176.2 L441.8 175.9 L442.9 175.4 L444.1 175.0 L445.2 174.7 L446.3 174.4 L447.5 174.1 L448.6 173.8 L449.7 173.6 L450.9 173.4 L452.0 173.3 L453.1 173.1 L454.3 173.0 L455.4 173.0 L456.5 173.0 L457.7 173.1 L458.8 173.2 L459.9 173.3 L461.1 173.5 L462.2 173.6 L463.3 173.8 L464.5 174.1 L465.6 174.3 L466.7 174.6 L467.9 175.1 L469.0 175.4 L470.1 175.7 L471.3 176.1 L472.4 176.7 L473.5 177.3 L474.7 178.1 L475.8 178.9 L476.9 179.7 L478.1 180.5 L479.2 181.3 L480.3 182.0 L481.5 182.8 L482.6 183.2 L483.7 182.8 L484.9 182.5 L486.0 182.0 L486.0 182.0 L484.9 182.5 L483.7 182.8 L482.6 183.2 L481.5 183.5 L480.3 183.8 L479.2 184.1 L478.1 184.4 L476.9 184.6 L475.8 184.8 L474.7 185.1 L473.5 185.3 L472.4 185.4 L471.3 185.6 L470.1 185.8 L469.0 185.9 L467.9 186.1 L466.7 186.2 L465.6 186.4 L464.5 186.5 L463.3 186.7 L462.2 186.7 L461.1 186.9 L459.9 187.0 L458.8 187.1 L457.7 187.2 L456.5 187.4 L455.4 187.5 L454.3 187.6 L453.1 187.7 L452.0 187.8 L450.9 187.9 L449.7 188.0 L448.6 188.1 L447.5 188.2 L446.3 188.4 L445.2 188.4 L444.1 188.5 L442.9 188.7 L441.8 188.7 L440.7 188.8 L439.5 188.9 L438.4 189.0 L437.3 189.1 L436.1 189.1 L435.0 189.3 L433.9 189.4 L432.7 189.4 L431.6 189.5 L430.5 189.6 L429.3 189.7 L428.2 189.8 L427.1 189.9 L425.9 189.9 L424.8 190.1 L423.7 190.1 L422.5 190.2 L421.4 190.3 L420.3 190.4 L419.1 190.5 L418.0 190.6Z" fill="#6fb8ee"/><path d="M420.0 190.4 L421.1 190.4 L422.1 190.3 L423.1 190.1 L424.2 190.1 L425.2 190.0 L426.3 189.9 L427.4 189.9 L428.4 189.8 L429.4 189.7 L430.5 189.6 L431.6 189.5 L432.6 189.4 L433.6 189.4 L434.7 189.3 L435.8 189.2 L436.8 189.1 L437.9 189.0 L438.9 188.9 L439.9 188.9 L441.0 188.8 L442.1 188.7 L443.1 188.7 L444.1 188.5 L445.2 188.4 L446.2 188.4 L447.3 188.2 L448.4 188.1 L449.4 188.1 L450.4 187.9 L451.5 187.9 L452.6 187.8 L453.6 187.6 L454.6 187.6 L455.7 187.4 L456.8 187.4 L457.8 187.2 L458.9 187.1 L459.9 187.0 L460.9 186.9 L462.0 186.8 L463.1 186.7 L464.1 186.5 L465.1 186.4 L466.2 186.3 L467.2 186.2 L468.3 186.0 L469.4 185.9 L470.4 185.8 L471.4 185.6 L472.5 185.4 L473.6 185.3 L474.6 185.1 L475.6 184.9 L476.7 184.6 L477.8 184.5 L478.8 184.2 L479.9 184.0 L480.9 183.7 L481.9 183.4 L483.0 183.0 L483.0 194.3 L481.9 194.6 L480.9 194.7 L479.9 194.8 L478.8 194.9 L477.8 195.0 L476.7 195.1 L475.6 195.4 L474.6 195.5 L473.6 195.6 L472.5 195.7 L471.4 195.8 L470.4 196.0 L469.4 196.1 L468.3 196.2 L467.2 196.3 L466.2 196.4 L465.1 196.5 L464.1 196.7 L463.1 196.8 L462.0 196.9 L460.9 197.0 L459.9 197.1 L458.9 197.2 L457.8 197.3 L456.8 197.4 L455.7 197.5 L454.6 197.6 L453.6 197.6 L452.6 197.7 L451.5 197.8 L450.4 197.9 L449.4 198.0 L448.4 198.1 L447.3 198.2 L446.2 198.4 L445.2 198.5 L444.1 198.6 L443.1 198.7 L442.1 198.8 L441.0 198.9 L439.9 199.0 L438.9 199.1 L437.9 199.2 L436.8 199.3 L435.8 199.5 L434.7 199.6 L433.6 199.7 L432.6 199.8 L431.6 199.9 L430.5 200.0 L429.4 200.1 L428.4 200.1 L427.4 200.2 L426.3 200.4 L425.2 200.5 L424.2 200.6 L423.1 200.7 L422.1 200.9 L421.1 201.0 L420.0 201.2Z" fill="#64aae6"/><path d="M386.0 278.9 C391.7 278.1 409.3 274.8 420.0 274.3 C430.7 273.8 440.0 275.9 450.0 276.0 C460.0 276.1 470.0 275.2 480.0 275.0 C490.0 274.8 500.0 275.3 510.0 275.0 C520.0 274.7 528.3 273.7 540.0 273.2 C551.7 272.7 570.0 272.9 580.0 272.0 C590.0 271.1 593.3 269.7 600.0 268.0 C606.7 266.3 613.3 263.8 620.0 262.0 C626.7 260.2 633.3 258.4 640.0 257.4 C646.7 256.4 653.3 255.9 660.0 256.0 C666.7 256.1 674.7 257.3 680.0 258.0 C685.3 258.7 690.0 259.7 692.0 260.0 L692.0 385.3 L386.0 385.3 Z" fill="#4aaab9" stroke="rgba(40,40,60,0.18)" stroke-width="0.5"/><path d="M386.0 281.6 C391.7 281.7 409.3 282.6 420.0 282.0 C430.7 281.4 441.7 279.1 450.0 278.0 C458.3 276.9 463.3 276.0 470.0 275.5 C476.7 275.0 483.3 274.8 490.0 275.0 C496.7 275.2 501.7 276.1 510.0 277.0 C518.3 277.9 528.3 280.2 540.0 280.6 C551.7 281.0 568.3 280.6 580.0 279.5 C591.7 278.4 598.3 276.2 610.0 274.0 C621.7 271.8 636.3 267.8 650.0 266.0 C663.7 264.2 685.0 263.5 692.0 263.0 L692.0 385.3 L386.0 385.3 Z" fill="#90cb8f" stroke="rgba(40,40,60,0.18)" stroke-width="0.5"/><path d="M386.0 332.0 C410.0 330.7 502.7 327.0 530.0 324.0 C557.3 321.0 544.7 316.2 550.0 314.0 C555.3 311.8 557.7 311.1 562.0 311.0 C566.3 310.9 571.3 312.7 576.0 313.5 C580.7 314.3 586.0 316.2 590.0 316.0 C594.0 315.8 596.0 315.5 600.0 312.0 C604.0 308.5 608.8 301.7 614.0 295.0 C619.2 288.3 626.2 278.5 631.0 272.0 C635.8 265.5 639.0 260.0 643.0 256.0 C647.0 252.0 651.3 249.2 655.0 248.0 C658.7 246.8 661.3 247.3 665.0 248.5 C668.7 249.7 673.5 252.8 677.0 255.0 C680.5 257.2 683.5 259.8 686.0 262.0 C688.5 264.2 691.0 267.0 692.0 268.0 L692.0 385.3 L386.0 385.3 Z" fill="#dfbd5f" stroke="rgba(40,40,60,0.18)" stroke-width="0.5"/><path d="M636.0 258.1 L636.9 257.9 L637.9 257.7 L638.8 257.6 L639.7 257.5 L640.7 257.3 L641.6 257.2 L642.5 256.6 L643.5 255.4 L644.4 254.6 L645.3 253.8 L646.3 253.0 L647.2 252.3 L648.1 251.6 L649.1 251.0 L650.0 250.4 L650.9 249.9 L651.9 249.4 L652.8 248.9 L653.7 248.5 L654.7 248.1 L655.6 247.8 L656.5 247.6 L657.5 247.4 L658.4 247.3 L659.3 247.3 L660.3 247.4 L661.2 247.5 L662.1 247.7 L663.1 247.9 L664.0 248.2 L664.9 248.5 L665.9 248.8 L666.8 249.1 L667.7 249.5 L668.7 250.0 L669.6 250.5 L670.5 251.0 L671.5 251.5 L672.4 252.1 L673.3 252.6 L674.3 253.2 L675.2 253.9 L676.1 254.5 L677.1 255.0 L678.0 255.7 L678.9 256.4 L679.9 256.9 L680.8 257.6 L681.7 258.2 L682.7 258.4 L683.6 258.5 L684.5 258.7 L685.5 258.8 L686.4 259.0 L687.3 259.1 L688.3 259.3 L689.2 259.5 L690.1 259.6 L691.1 259.8 L692.0 260.0 L692.0 260.0 L691.1 259.8 L690.1 259.6 L689.2 259.5 L688.3 259.3 L687.3 259.1 L686.4 259.0 L685.5 258.8 L684.5 258.7 L683.6 258.5 L682.7 258.4 L681.7 258.2 L680.8 258.1 L679.9 258.0 L678.9 257.8 L678.0 257.7 L677.1 257.6 L676.1 257.5 L675.2 257.4 L674.3 257.2 L673.3 257.1 L672.4 257.0 L671.5 256.9 L670.5 256.8 L669.6 256.7 L668.7 256.6 L667.7 256.5 L666.8 256.4 L665.9 256.3 L664.9 256.3 L664.0 256.2 L663.1 256.1 L662.1 256.1 L661.2 256.0 L660.3 256.0 L659.3 256.0 L658.4 256.0 L657.5 256.0 L656.5 256.0 L655.6 256.0 L654.7 256.1 L653.7 256.1 L652.8 256.1 L651.9 256.2 L650.9 256.2 L650.0 256.3 L649.1 256.4 L648.1 256.4 L647.2 256.5 L646.3 256.6 L645.3 256.7 L644.4 256.8 L643.5 256.9 L642.5 257.0 L641.6 257.2 L640.7 257.3 L639.7 257.5 L638.8 257.6 L637.9 257.7 L636.9 257.9 L636.0 258.1Z" fill="#d3b673"/><path d="M386.0 318.0 C395.0 318.4 425.3 319.8 440.0 320.5 C454.7 321.2 462.3 322.2 474.0 322.5 C485.7 322.8 500.0 322.3 510.0 322.0 C520.0 321.7 525.7 321.5 534.0 320.7 C542.3 319.9 550.0 318.3 560.0 317.0 C570.0 315.7 582.3 313.8 594.0 313.0 C605.7 312.2 618.3 312.3 630.0 312.0 C641.7 311.7 653.7 310.7 664.0 311.0 C674.3 311.3 687.3 313.2 692.0 313.7 L692.0 385.3 L386.0 385.3 Z" fill="url(#salg)" stroke="rgba(40,40,60,0.18)" stroke-width="0.5"/><path d="M386.0 342.0 C389.2 340.8 397.7 337.1 405.0 335.0 C412.3 332.9 422.5 330.6 430.0 329.5 C437.5 328.4 442.5 328.4 450.0 328.7 C457.5 328.9 467.5 329.9 475.0 331.0 C482.5 332.1 488.3 333.2 495.0 335.0 C501.7 336.8 481.8 340.8 515.0 342.0 C548.2 343.2 664.2 342.0 694.0 342.0 L694.0 385.3 L386.0 385.3 Z" fill="#f1a06e" stroke="rgba(40,40,60,0.18)" stroke-width="0.5"/><path d="M386.0 342.0 C390.0 341.4 400.3 339.8 410.0 338.5 C419.7 337.2 433.3 335.2 444.0 334.0 C454.7 332.8 459.0 332.4 474.0 331.4 C489.0 330.4 519.0 329.0 534.0 327.8 C549.0 326.6 554.0 324.9 564.0 324.0 C574.0 323.1 583.0 323.0 594.0 322.5 C605.0 322.0 618.3 321.4 630.0 321.0 C641.7 320.6 653.7 320.5 664.0 320.0 C674.3 319.5 687.3 318.3 692.0 318.0 L692.0 385.3 L386.0 385.3 Z" fill="#a28f8e" stroke="rgba(40,40,60,0.18)" stroke-width="0.5"/><path d="M386.0 346.0 C400.7 344.7 452.5 339.2 474.0 338.0 C495.5 336.8 504.8 339.8 515.0 339.0 C525.2 338.2 528.8 335.0 535.0 333.0 C541.2 331.0 546.5 328.5 552.0 327.0 C557.5 325.5 562.5 324.2 568.0 324.0 C573.5 323.8 579.7 324.3 585.0 325.5 C590.3 326.7 595.0 329.1 600.0 331.0 C605.0 332.9 606.7 335.5 615.0 337.0 C623.3 338.5 637.2 339.2 650.0 340.0 C662.8 340.8 685.0 341.7 692.0 342.0 L692.0 385.3 L386.0 385.3 Z" fill="#7676c2" stroke="rgba(40,40,60,0.18)" stroke-width="0.5"/><path d="M386.0 346.0 C413.3 345.3 518.5 343.7 550.0 342.0 C581.5 340.3 567.7 337.8 575.0 336.0 C582.3 334.2 586.5 332.4 594.0 331.4 C601.5 330.4 608.3 329.7 620.0 330.0 C631.7 330.3 652.0 332.0 664.0 333.0 C676.0 334.0 687.3 335.5 692.0 336.0 L692.0 385.3 L386.0 385.3 Z" fill="#3b9fe0" stroke="rgba(40,40,60,0.18)" stroke-width="0.5"/><path d="M386.0 336.3 C395.7 336.7 429.3 338.1 444.0 338.5 C458.7 338.9 459.0 338.8 474.0 338.5 C489.0 338.2 514.0 337.5 534.0 337.0 C554.0 336.5 578.0 335.5 594.0 335.5 C610.0 335.5 618.3 336.5 630.0 337.0 C641.7 337.5 653.7 337.8 664.0 338.3 C674.3 338.8 687.3 339.7 692.0 340.0 L692.0 385.3 L386.0 385.3 Z" fill="#2aa6b0" stroke="rgba(40,40,60,0.18)" stroke-width="0.5"/><path d="M386.0 345.4 C391.7 345.3 409.3 345.1 420.0 345.0 C430.7 344.9 404.7 344.8 450.0 344.6 C495.3 344.4 651.7 344.1 692.0 344.0 L692.0 385.3 L386.0 385.3 Z" fill="#8cc870" stroke="rgba(40,40,60,0.18)" stroke-width="0.5"/><path d="M386.0 347.0 C400.7 346.8 449.3 346.0 474.0 345.8 C498.7 345.6 515.7 346.1 534.0 345.9 C552.3 345.7 569.7 344.8 584.0 344.5 C598.3 344.2 602.0 344.2 620.0 344.0 C638.0 343.8 680.0 343.6 692.0 343.5 L692.0 385.3 L386.0 385.3 Z" fill="#d2b03e" stroke="rgba(40,40,60,0.18)" stroke-width="0.5"/><path d="M386.0 350.2 C391.7 350.1 407.0 349.9 420.0 349.5 C433.0 349.1 445.0 348.2 464.0 348.0 C483.0 347.8 514.0 348.4 534.0 348.0 C554.0 347.6 569.7 346.2 584.0 345.5 C598.3 344.8 607.8 344.4 620.0 344.0 C632.2 343.6 645.0 343.1 657.0 343.0 C669.0 342.9 686.2 343.4 692.0 343.5 L692.0 385.3 L386.0 385.3 Z" fill="#f0883c" stroke="rgba(40,40,60,0.18)" stroke-width="0.5"/><path d="M386.0 359.0 C393.3 358.7 417.0 357.9 430.0 357.0 C443.0 356.1 451.7 354.3 464.0 353.5 C476.3 352.7 490.7 352.6 504.0 352.4 C517.3 352.1 530.7 352.4 544.0 352.0 C557.3 351.6 571.3 350.9 584.0 350.2 C596.7 349.4 607.8 347.9 620.0 347.5 C632.2 347.1 645.0 347.7 657.0 347.6 C669.0 347.5 686.2 347.1 692.0 347.0 L692.0 385.3 L386.0 385.3 Z" fill="#8b7b7a" stroke="rgba(40,40,60,0.18)" stroke-width="0.5"/><path d="M386.0 357.8 C393.3 357.7 417.0 357.3 430.0 357.0 C443.0 356.7 451.7 356.2 464.0 356.0 C476.3 355.8 490.7 355.7 504.0 355.5 C517.3 355.3 530.7 355.2 544.0 355.0 C557.3 354.8 571.3 354.5 584.0 354.0 C596.7 353.5 607.8 352.5 620.0 352.0 C632.2 351.5 645.0 351.3 657.0 351.0 C669.0 350.7 686.2 350.2 692.0 350.0 L692.0 385.3 L386.0 385.3 Z" fill="#8e3e9c" stroke="rgba(40,40,60,0.18)" stroke-width="0.5"/><path d="M386.0 368.0 C398.7 367.8 446.3 367.8 462.0 367.0 C477.7 366.2 473.0 364.2 480.0 363.0 C487.0 361.8 495.7 360.5 504.0 360.0 C512.3 359.5 520.7 359.6 530.0 359.8 C539.3 360.0 551.0 361.1 560.0 361.0 C569.0 360.9 575.7 360.2 584.0 359.0 C592.3 357.8 601.5 355.5 610.0 354.0 C618.5 352.5 627.2 350.9 635.0 350.0 C642.8 349.1 649.5 348.7 657.0 348.7 C664.5 348.7 674.2 349.4 680.0 350.0 C685.8 350.6 690.0 351.7 692.0 352.0 L692.0 385.3 L386.0 385.3 Z" fill="#5648aa" stroke="rgba(40,40,60,0.18)" stroke-width="0.5"/><path d="M386.0 362.0 C390.0 362.2 401.0 362.8 410.0 363.5 C419.0 364.2 430.0 365.4 440.0 366.5 C450.0 367.6 454.3 368.4 470.0 370.0 C485.7 371.6 516.5 376.7 534.0 376.0 C551.5 375.3 564.0 368.3 575.0 366.0 C586.0 363.7 590.8 363.1 600.0 362.0 C609.2 360.9 620.5 360.1 630.0 359.5 C639.5 358.9 646.7 357.9 657.0 358.2 C667.3 358.4 686.2 360.5 692.0 361.0 L692.0 385.3 L386.0 385.3 Z" fill="#2c89d8" stroke="rgba(40,40,60,0.18)" stroke-width="0.5"/><path d="M386.0 374.0 C416.7 373.7 534.3 373.3 570.0 372.0 C605.7 370.7 591.7 367.1 600.0 366.0 C608.3 364.9 613.3 365.4 620.0 365.5 C626.7 365.6 628.0 366.1 640.0 366.5 C652.0 366.9 683.3 367.8 692.0 368.0 L692.0 385.3 L386.0 385.3 Z" fill="#4aa860" stroke="rgba(40,40,60,0.18)" stroke-width="0.5"/><path d="M386.0 374.0 C403.3 373.7 469.3 373.0 490.0 372.0 C510.7 371.0 502.7 369.0 510.0 368.0 C517.3 367.0 524.0 366.6 534.0 366.0 C544.0 365.4 560.7 364.7 570.0 364.5 C579.3 364.3 583.3 364.2 590.0 365.0 C596.7 365.8 601.7 367.8 610.0 369.0 C618.3 370.2 626.0 371.5 640.0 372.0 C654.0 372.5 685.0 372.0 694.0 372.0 L694.0 385.3 L386.0 385.3 Z" fill="#d8a12a" stroke="rgba(40,40,60,0.18)" stroke-width="0.5"/><path d="M386.0 366.4 C395.0 366.3 427.0 366.0 440.0 366.0 C453.0 366.0 455.7 366.3 464.0 366.5 C472.3 366.7 481.5 366.2 490.0 367.0 C498.5 367.8 506.7 370.3 515.0 371.0 C523.3 371.7 528.5 371.2 540.0 371.0 C551.5 370.8 570.7 370.2 584.0 370.0 C597.3 369.8 610.7 369.7 620.0 370.0 C629.3 370.3 628.0 371.3 640.0 372.0 C652.0 372.7 683.3 373.7 692.0 374.0 L692.0 385.3 L386.0 385.3 Z" fill="#e9712c" stroke="rgba(40,40,60,0.18)" stroke-width="0.5"/><path d="M386.0 380.0 C415.0 379.7 521.0 379.3 560.0 378.0 C599.0 376.7 603.8 374.1 620.0 372.0 C636.2 369.9 645.0 367.2 657.0 365.6 C669.0 364.0 686.2 363.0 692.0 362.5 L692.0 385.3 L386.0 385.3 Z" fill="#2a8aa0" stroke="rgba(40,40,60,0.18)" stroke-width="0.5"/><path d="M386.0 379.0 C395.0 378.8 427.7 378.3 440.0 377.5 C452.3 376.7 453.3 375.0 460.0 374.0 C466.7 373.0 473.3 371.8 480.0 371.5 C486.7 371.2 493.3 371.4 500.0 372.0 C506.7 372.6 512.5 373.8 520.0 375.0 C527.5 376.2 516.3 378.2 545.0 379.0 C573.7 379.8 667.5 379.8 692.0 380.0 L692.0 385.3 L386.0 385.3 Z" fill="#2c6b5c" stroke="rgba(40,40,60,0.18)" stroke-width="0.5"/><path d="M386.0 373.0 C391.7 373.2 409.3 373.4 420.0 374.0 C430.7 374.6 436.7 376.0 450.0 376.5 C463.3 377.0 486.0 377.0 500.0 377.0 C514.0 377.0 520.0 377.2 534.0 376.5 C548.0 375.8 569.7 373.4 584.0 372.8 C598.3 372.2 602.0 372.8 620.0 373.0 C638.0 373.2 680.0 373.8 692.0 374.0 L692.0 385.3 L386.0 385.3 Z" fill="#6a5050" stroke="rgba(40,40,60,0.18)" stroke-width="0.5"/><path d="M386.0 375.0 C395.0 375.3 415.3 376.5 440.0 377.0 C464.7 377.5 507.3 378.0 534.0 378.0 C560.7 378.0 573.7 377.2 600.0 377.0 C626.3 376.8 676.7 377.0 692.0 377.0 L692.0 385.3 L386.0 385.3 Z" fill="#6a3a7a" stroke="rgba(40,40,60,0.18)" stroke-width="0.5"/><path d="M386.0 379.5 C400.7 379.5 449.3 379.5 474.0 379.5 C498.7 379.5 519.7 379.9 534.0 379.5 C548.3 379.1 551.7 377.7 560.0 377.0 C568.3 376.3 575.7 375.8 584.0 375.5 C592.3 375.2 600.7 374.6 610.0 375.0 C619.3 375.4 626.3 377.1 640.0 378.0 C653.7 378.9 683.3 380.1 692.0 380.5 L692.0 385.3 L386.0 385.3 Z" fill="#58b0d0" stroke="rgba(40,40,60,0.18)" stroke-width="0.5"/><path d="M386.0 382.0 C389.2 381.5 397.7 380.1 405.0 379.0 C412.3 377.9 421.7 375.9 430.0 375.5 C438.3 375.1 447.5 375.8 455.0 376.5 C462.5 377.2 468.3 378.6 475.0 379.5 C481.7 380.4 458.5 381.6 495.0 382.0 C531.5 382.4 660.8 382.0 694.0 382.0 L694.0 385.3 L386.0 385.3 Z" fill="#6b70c8" stroke="rgba(40,40,60,0.18)" stroke-width="0.5"/><path d="M386.0 384.0 C421.3 384.0 560.0 384.7 598.0 384.0 C636.0 383.3 608.3 381.5 614.0 380.0 C619.7 378.5 626.0 376.3 632.0 375.0 C638.0 373.7 644.0 372.2 650.0 372.0 C656.0 371.8 663.0 372.7 668.0 373.5 C673.0 374.3 676.7 375.6 680.0 377.0 C683.3 378.4 686.0 380.8 688.0 382.0 C690.0 383.2 691.3 383.7 692.0 384.0 L692.0 385.3 L386.0 385.3 Z" fill="#a2c272" stroke="rgba(40,40,60,0.18)" stroke-width="0.5"/><path d="M386.0 381.2 C396.7 381.2 425.3 381.4 450.0 381.5 C474.7 381.6 509.0 381.9 534.0 381.8 C559.0 381.8 573.7 381.2 600.0 381.2 C626.3 381.1 676.7 381.4 692.0 381.5 L692.0 385.3 L386.0 385.3 Z" fill="#8a5a7a" stroke="rgba(40,40,60,0.18)" stroke-width="0.5"/></g><line x1="386.0" y1="85.5" x2="386.0" y2="384.3" stroke="#8e8e94" stroke-width="1"/><line x1="386.0" y1="384.3" x2="692.0" y2="384.3" stroke="#8e8e94" stroke-width="0.6"/></svg><div class="t" style="left:300px;width:83.6px;text-align:right;top:81.8px;font-size:6.5px;color:#4a4e58">2 Gbit/s</div><div class="t" style="left:300px;width:83.6px;text-align:right;top:155.9px;font-size:6.5px;color:#4a4e58">1.5 Gbit/s</div><div class="t" style="left:300px;width:83.6px;text-align:right;top:230.6px;font-size:6.5px;color:#4a4e58">1 Gbit/s</div><div class="t" style="left:300px;width:83.6px;text-align:right;top:305.3px;font-size:6.5px;color:#4a4e58">500 Mbit/s</div><div class="t" style="left:386px;top:384.3px;font-size:5.5px;color:#4a4e58">12.12 13:00</div><div class="t" style="left:466px;top:384.3px;font-size:5.5px;color:#4a4e58">13:30</div><div class="t" style="left:546.4px;top:384.3px;font-size:5.5px;color:#4a4e58">12.12 14:00</div><div class="t" style="left:640.8px;top:384.3px;font-size:5.5px;color:#4a4e58">14:30</div>
<div class="a" style="left:349.4px;top:403px;width:352px;height:1px;background:#eef0f5"></div>
<div class="t" style="left:353px;top:406px;font-size:6.9px;color:#3a3e48">1-8 of 8</div>
<div class="t" style="left:459px;top:406.5px;font-size:6.6px;font-weight:bold;color:#2f80d8;letter-spacing:-0.6px">&lt;&lt;</div>
<div class="t" style="left:480.2px;top:406.5px;font-size:6.6px;font-weight:bold;color:#2f80d8">&lt;</div>
<div class="a" style="left:493px;top:404.4px;width:15px;height:13px;background:#1f7fd8;border-radius:1.5px"></div>
<div class="t" style="left:493px;width:15px;text-align:center;top:406px;font-size:6.8px;font-weight:bold;color:#fff">1</div>
<div class="t" style="left:517.2px;top:406.5px;font-size:6.6px;font-weight:bold;color:#2f80d8">&gt;</div>
<div class="t" style="left:533.5px;top:406.5px;font-size:6.6px;font-weight:bold;color:#2f80d8;letter-spacing:-0.6px">&gt;&gt;</div>
<div class="a" style="left:594px;top:403.7px;width:9px;height:9px;border-radius:50%;background:#d7ebfb"></div>
<svg class="a" style="left:590.6px;top:408px" width="7" height="7" viewBox="0 0 7 7"><circle cx="3.5" cy="3.5" r="2.8" fill="none" stroke="#6a6f7c" stroke-width="0.6"/><circle cx="3.5" cy="3.5" r="1.2" fill="none" stroke="#6a6f7c" stroke-width="0.6"/></svg>
<div class="t" style="left:596.3px;top:403px;font-size:5.6px;font-weight:bold;color:#2f80d8">2</div>
<svg class="a" style="left:618.8px;top:407.5px" width="8" height="7" viewBox="0 0 8 7"><path d="M4.5 2.5 V1 L3.5 0.3 H0.5 V6.6 H4.5 V5" fill="none" stroke="#5a5f6c" stroke-width="0.7"/><path d="M2.5 3.8 H7 M6 2.8 L7 3.8 L6 4.8" fill="none" stroke="#5a5f6c" stroke-width="0.7"/></svg>
<div class="t" style="left:629.8px;top:406px;font-size:6.6px;font-weight:bold;color:#3a3e48">Export</div>
<div class="box" style="left:665.2px;top:404.4px;width:35.3px;height:13.3px"></div>
<div class="t" style="left:669px;top:406px;font-size:6.7px;color:#3a3e48">2 000</div>
<svg class="a" style="left:690.8px;top:408px" width="5" height="6" viewBox="0 0 5 6"><path d="M2.5 0.3 V5.3 M0.6 3.5 L2.5 5.4 L4.4 3.5" fill="none" stroke="#5a5f6c" stroke-width="0.7"/></svg>
<div class="a" style="left:705.3px;top:68.3px;width:188px;height:360px;overflow:hidden"></div><div class="a" style="left:0;top:0;width:893px;height:418px;overflow:hidden"><div class="rr" style="top:69.50px;background:#fff"></div><svg class="a" style="left:709.2px;top:74.80px" width="6" height="6" viewBox="0 0 6 6"><rect x="0.4" y="0.4" width="5.2" height="5.2" rx="0.6" fill="none" stroke="#8b909c" stroke-width="0.7"/><path d="M1.8 3 H4.2" stroke="#8b909c" stroke-width="0.6"/></svg><svg class="a" style="left:719.3px;top:74.90px" width="8" height="6" viewBox="0 0 8 6"><path d="M0.3 5.7 V0.6 H2.6 L3.3 1.3 H6.3 V2.2" fill="none" stroke="#3b3f4a" stroke-width="0.7"/><path d="M0.3 5.7 L1.6 2.4 H7.7 L6.4 5.7 Z" fill="#3b3f4a"/></svg><div class="t rt" style="left:730.7px;top:73.20px">Traffic speed</div><div class="rr" style="top:88.25px;background:#fafbfd"></div><svg class="a" style="left:729.2px;top:93.75px" width="5" height="6.4" viewBox="0 0 5 6.4"><path d="M0.4 0.4 H3 L4.6 2 V6 H0.4 Z M3 0.4 V2 H4.6" fill="none" stroke="#555a66" stroke-width="0.7" stroke-linejoin="round"/></svg><div class="t rt" style="top:92.35px">Traffic speed</div><div class="rr" style="top:107.00px;background:#fff"></div><svg class="a" style="left:729.2px;top:112.50px" width="5" height="6.4" viewBox="0 0 5 6.4"><path d="M0.4 0.4 H3 L4.6 2 V6 H0.4 Z M3 0.4 V2 H4.6" fill="none" stroke="#555a66" stroke-width="0.7" stroke-linejoin="round"/></svg><div class="t rt" style="top:111.10px">Traffic by protocols</div><div class="rr" style="top:125.75px;background:#fafbfd"></div><svg class="a" style="left:729.2px;top:131.25px" width="5" height="6.4" viewBox="0 0 5 6.4"><path d="M0.4 0.4 H3 L4.6 2 V6 H0.4 Z M3 0.4 V2 H4.6" fill="none" stroke="#555a66" stroke-width="0.7" stroke-linejoin="round"/></svg><div class="t rt" style="top:129.85px">Traffic by application protocols</div><div class="rr" style="top:144.50px;background:#fff"></div><svg class="a" style="left:729.2px;top:150.00px" width="5" height="6.4" viewBox="0 0 5 6.4"><path d="M0.4 0.4 H3 L4.6 2 V6 H0.4 Z M3 0.4 V2 H4.6" fill="none" stroke="#555a66" stroke-width="0.7" stroke-linejoin="round"/></svg><div class="t rt" style="top:148.60px">Traffic by application protocols groups</div><div class="rr" style="top:163.25px;background:#fafbfd"></div><svg class="a" style="left:729.2px;top:168.75px" width="5" height="6.4" viewBox="0 0 5 6.4"><path d="M0.4 0.4 H3 L4.6 2 V6 H0.4 Z M3 0.4 V2 H4.6" fill="none" stroke="#555a66" stroke-width="0.7" stroke-linejoin="round"/></svg><div class="t rt" style="top:167.35px">Traffic by AS</div><div class="rr" style="top:182.00px;background:#fff"></div><svg class="a" style="left:729.2px;top:187.50px" width="5" height="6.4" viewBox="0 0 5 6.4"><path d="M0.4 0.4 H3 L4.6 2 V6 H0.4 Z M3 0.4 V2 H4.6" fill="none" stroke="#555a66" stroke-width="0.7" stroke-linejoin="round"/></svg><div class="t rt" style="top:186.10px">Traffic by subscriber's AS</div><div class="rr" style="top:200.75px;background:#fafbfd"></div><svg class="a" style="left:729.2px;top:206.25px" width="5" height="6.4" viewBox="0 0 5 6.4"><path d="M0.4 0.4 H3 L4.6 2 V6 H0.4 Z M3 0.4 V2 H4.6" fill="none" stroke="#555a66" stroke-width="0.7" stroke-linejoin="round"/></svg><div class="t rt" style="top:204.85px">Traffic by vchannels</div><div class="rr" style="top:219.50px;background:#fff"></div><svg class="a" style="left:729.2px;top:225.00px" width="5" height="6.4" viewBox="0 0 5 6.4"><path d="M0.4 0.4 H3 L4.6 2 V6 H0.4 Z M3 0.4 V2 H4.6" fill="none" stroke="#555a66" stroke-width="0.7" stroke-linejoin="round"/></svg><div class="t rt" style="top:223.60px">Traffic by classes</div><div class="rr" style="top:238.25px;background:#fafbfd"></div><svg class="a" style="left:729.2px;top:243.75px" width="5" height="6.4" viewBox="0 0 5 6.4"><path d="M0.4 0.4 H3 L4.6 2 V6 H0.4 Z M3 0.4 V2 H4.6" fill="none" stroke="#555a66" stroke-width="0.7" stroke-linejoin="round"/></svg><div class="t rt" style="top:242.35px">Traffic by DSCP</div><div class="rr" style="top:257.00px;background:#fff"></div><svg class="a" style="left:729.2px;top:262.50px" width="5" height="6.4" viewBox="0 0 5 6.4"><path d="M0.4 0.4 H3 L4.6 2 V6 H0.4 Z M3 0.4 V2 H4.6" fill="none" stroke="#555a66" stroke-width="0.7" stroke-linejoin="round"/></svg><div class="t rt" style="top:261.10px">Flow</div><div class="rr" style="top:275.75px;background:#fafbfd"></div><svg class="a" style="left:729.2px;top:281.25px" width="5" height="6.4" viewBox="0 0 5 6.4"><path d="M0.4 0.4 H3 L4.6 2 V6 H0.4 Z M3 0.4 V2 H4.6" fill="none" stroke="#555a66" stroke-width="0.7" stroke-linejoin="round"/></svg><div class="t rt" style="top:279.85px">Flow by protocols</div><div class="rr" style="top:294.50px;background:#fff"></div><svg class="a" style="left:729.2px;top:300.00px" width="5" height="6.4" viewBox="0 0 5 6.4"><path d="M0.4 0.4 H3 L4.6 2 V6 H0.4 Z M3 0.4 V2 H4.6" fill="none" stroke="#555a66" stroke-width="0.7" stroke-linejoin="round"/></svg><div class="t rt" style="top:298.60px">Flow by application protocols</div><div class="rr" style="top:313.25px;background:#fafbfd"></div><svg class="a" style="left:729.2px;top:318.75px" width="5" height="6.4" viewBox="0 0 5 6.4"><path d="M0.4 0.4 H3 L4.6 2 V6 H0.4 Z M3 0.4 V2 H4.6" fill="none" stroke="#555a66" stroke-width="0.7" stroke-linejoin="round"/></svg><div class="t rt" style="top:317.35px">Flow by application protocols groups</div><div class="rr" style="top:332.00px;background:#fff"></div><svg class="a" style="left:729.2px;top:337.50px" width="5" height="6.4" viewBox="0 0 5 6.4"><path d="M0.4 0.4 H3 L4.6 2 V6 H0.4 Z M3 0.4 V2 H4.6" fill="none" stroke="#555a66" stroke-width="0.7" stroke-linejoin="round"/></svg><div class="t rt" style="top:336.10px">Flow by vchannels</div><div class="rr" style="top:350.75px;background:#fafbfd"></div><svg class="a" style="left:729.2px;top:356.25px" width="5" height="6.4" viewBox="0 0 5 6.4"><path d="M0.4 0.4 H3 L4.6 2 V6 H0.4 Z M3 0.4 V2 H4.6" fill="none" stroke="#555a66" stroke-width="0.7" stroke-linejoin="round"/></svg><div class="t rt" style="top:354.85px">Flow by classes</div><div class="rr" style="top:369.50px;background:#fff"></div><svg class="a" style="left:729.2px;top:375.00px" width="5" height="6.4" viewBox="0 0 5 6.4"><path d="M0.4 0.4 H3 L4.6 2 V6 H0.4 Z M3 0.4 V2 H4.6" fill="none" stroke="#555a66" stroke-width="0.7" stroke-linejoin="round"/></svg><div class="t rt" style="top:373.60px">Flow by DSCP</div><div class="rr" style="top:388.25px;background:#fafbfd"></div><svg class="a" style="left:709.2px;top:393.95px" width="6" height="6" viewBox="0 0 6 6"><rect x="0.4" y="0.4" width="5.2" height="5.2" rx="0.6" fill="none" stroke="#8b909c" stroke-width="0.7"/><path d="M1.8 3 H4.2 M3 1.8 V4.2" stroke="#8b909c" stroke-width="0.6"/></svg><svg class="a" style="left:719.3px;top:393.95px" width="7.5" height="6" viewBox="0 0 7.5 6"><path d="M0.4 5.6 V0.5 H2.8 L3.5 1.3 H7.1 V5.6 Z" fill="none" stroke="#3b3f4a" stroke-width="0.7" stroke-linejoin="round"/></svg><div class="t rt" style="left:730.7px;top:392.35px">Top</div><div class="rr" style="top:407.00px;background:#fff"></div><svg class="a" style="left:709.2px;top:412.70px" width="6" height="6" viewBox="0 0 6 6"><rect x="0.4" y="0.4" width="5.2" height="5.2" rx="0.6" fill="none" stroke="#8b909c" stroke-width="0.7"/><path d="M1.8 3 H4.2 M3 1.8 V4.2" stroke="#8b909c" stroke-width="0.6"/></svg><svg class="a" style="left:719.3px;top:412.70px" width="7.5" height="6" viewBox="0 0 7.5 6"><path d="M0.4 5.6 V0.5 H2.8 L3.5 1.3 H7.1 V5.6 Z" fill="none" stroke="#3b3f4a" stroke-width="0.7" stroke-linejoin="round"/></svg><div class="t rt" style="left:730.7px;top:411.10px">RTT</div></div><div class="a" style="left:703.7px;top:123.7px;width:191.3px;height:21.6px;border:1.6px solid #ec1c22;background:#eff0f6"></div><svg class="a" style="left:729.2px;top:131.25px" width="5" height="6.4" viewBox="0 0 5 6.4"><path d="M0.4 0.4 H3 L4.6 2 V6 H0.4 Z M3 0.4 V2 H4.6" fill="none" stroke="#555a66" stroke-width="0.7" stroke-linejoin="round"/></svg><div class="t rt" style="top:129.85px">Traffic by application protocols</div><div class="a" style="left:879.5px;top:406.6px;width:11px;height:11px;border-radius:50%;background:#fff;box-shadow:0 0.5px 2px rgba(0,0,0,0.18)"></div><svg class="a" style="left:882px;top:409.5px" width="6" height="5.5" viewBox="0 0 6 5.5"><path d="M1 0.4 H5 V1.8 M0.4 1.8 H5.6 V5.1 H0.4 Z" fill="none" stroke="#9aa2b2" stroke-width="0.7"/><rect x="1.3" y="3" width="3.4" height="1.6" fill="#9aa2b2"/></svg>
</body></html>
